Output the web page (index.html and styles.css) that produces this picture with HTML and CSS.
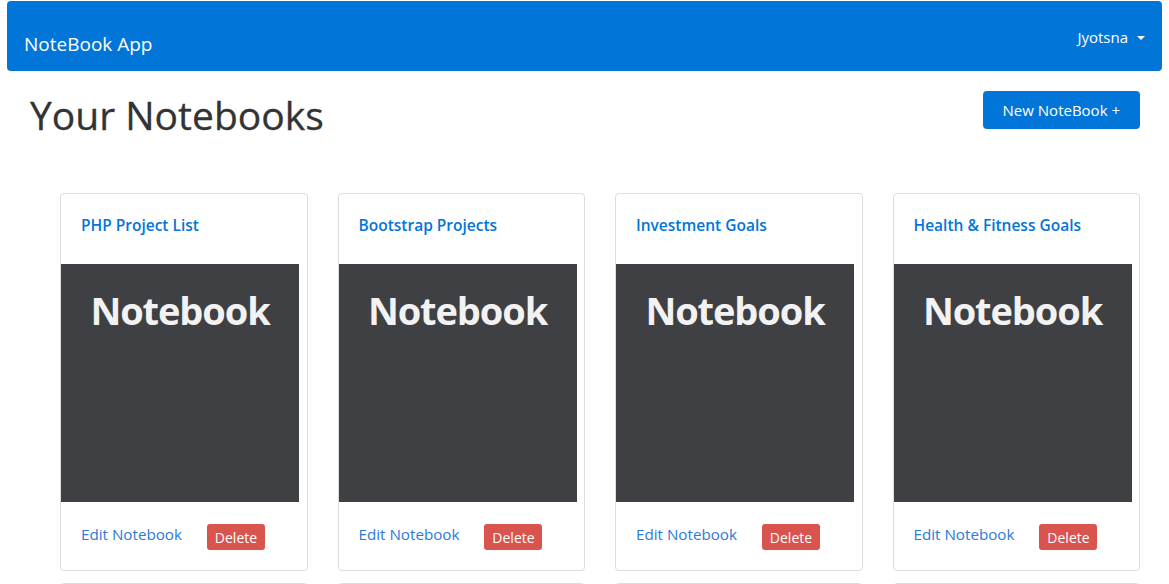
FILE: index.html
```html
<!DOCTYPE html>
<html lang="en">
<head>
<meta charset="utf-8">
<title>NoteBook App</title>
<link rel="stylesheet" href="styles.css">
</head>
<body>
<nav class="navbar">
  <a class="brand" href="#">NoteBook App</a>
  <div class="user">Jyotsna <span class="caret"></span></div>
</nav>
<main class="page">
  <header class="page-head">
    <h1 class="title">Your Notebooks</h1>
    <button class="btn-new">New NoteBook +</button>
  </header>
  <section class="grid">
    <article class="card">
      <h5 class="card-title">PHP Project List</h5>
      <div class="cover"><span>Notebook</span></div>
      <div class="card-foot"><a class="edit" href="#">Edit Notebook</a><button class="btn-del">Delete</button></div>
    </article>
    <article class="card">
      <h5 class="card-title">Bootstrap Projects</h5>
      <div class="cover"><span>Notebook</span></div>
      <div class="card-foot"><a class="edit" href="#">Edit Notebook</a><button class="btn-del">Delete</button></div>
    </article>
    <article class="card">
      <h5 class="card-title">Investment Goals</h5>
      <div class="cover"><span>Notebook</span></div>
      <div class="card-foot"><a class="edit" href="#">Edit Notebook</a><button class="btn-del">Delete</button></div>
    </article>
    <article class="card">
      <h5 class="card-title">Health &amp; Fitness Goals</h5>
      <div class="cover"><span>Notebook</span></div>
      <div class="card-foot"><a class="edit" href="#">Edit Notebook</a><button class="btn-del">Delete</button></div>
    </article>
    <article class="card"></article>
    <article class="card"></article>
    <article class="card"></article>
    <article class="card"></article>
  </section>
</main>
</body>
</html>
```
FILE: styles.css
```css
* { box-sizing: border-box; }
html, body { margin: 0; padding: 0; background: #fff; }
body {
  font-family: "Open Sans", "Noto Sans", sans-serif;
  color: #373a3c;
  overflow: hidden;
}
.navbar {
  margin: 1px 7px 0 7px;
  height: 70px;
  background: #0275d8;
  border-radius: 4px;
  display: flex;
  justify-content: space-between;
  align-items: flex-start;
  padding: 0 17px 0 17px;
}
.brand {
  color: #fff;
  text-decoration: none;
  font-size: 19px;
  line-height: 24px;
  margin-top: 31px;
}
.user {
  color: #fff;
  font-size: 15px;
  line-height: 20px;
  margin-top: 26px;
  display: flex;
  align-items: center;
}
.caret {
  display: inline-block;
  width: 0; height: 0;
  border-left: 4px solid transparent;
  border-right: 4px solid transparent;
  border-top: 4px solid #fff;
  margin-left: 9px;
  margin-top: 2px;
}
.page-head {
  display: flex;
  justify-content: space-between;
  align-items: flex-start;
  padding: 0 29px 0 30px;
  margin-top: 20px;
}
.title {
  margin: 0;
  font-size: 39px;
  font-weight: 500;
  line-height: 48px;
  color: #333;
  -webkit-text-stroke: 0.3px #333;
}
.btn-new {
  font-family: inherit;
  background: #0275d8;
  color: #fff;
  border: 0;
  border-radius: 4px;
  font-size: 15px;
  height: 38px;
  padding: 0 20px;
}
.grid {
  display: grid;
  grid-template-columns: repeat(4, 1fr);
  column-gap: 30px;
  row-gap: 12px;
  margin: 54px 29px 0 60px;
}
.card {
  border: 1px solid #ddd;
  border-radius: 4px;
  height: 378px;
  background: #fff;
}
.card-title {
  margin: 0;
  padding: 19px 20px 0 20px;
  height: 70px;
  font-size: 15.5px;
  line-height: 24px;
  font-weight: 600;
  color: #0275d8;
}
.cover {
  width: 238px;
  height: 238px;
  background: #3f4044;
  display: flex;
  justify-content: center;
  padding-top: 22px;
}
.cover span {
  color: #f2f2f2;
  font-size: 38px;
  font-weight: 700;
  line-height: 48px;
  letter-spacing: -1.1px;
}
.card-foot {
  display: flex;
  align-items: center;
  padding: 16px 20px 0 20px;
  gap: 25px;
}
.edit {
  color: #2d7ad6;
  text-decoration: none;
  font-size: 15.2px;
  line-height: 24px;
}
.btn-del {
  font-family: inherit;
  background: #d9534f;
  color: #fff;
  border: 0;
  border-radius: 3px;
  font-size: 14px;
  height: 26px;
  width: 58px;
  padding: 0;
  margin-top: 6px;
}
```
